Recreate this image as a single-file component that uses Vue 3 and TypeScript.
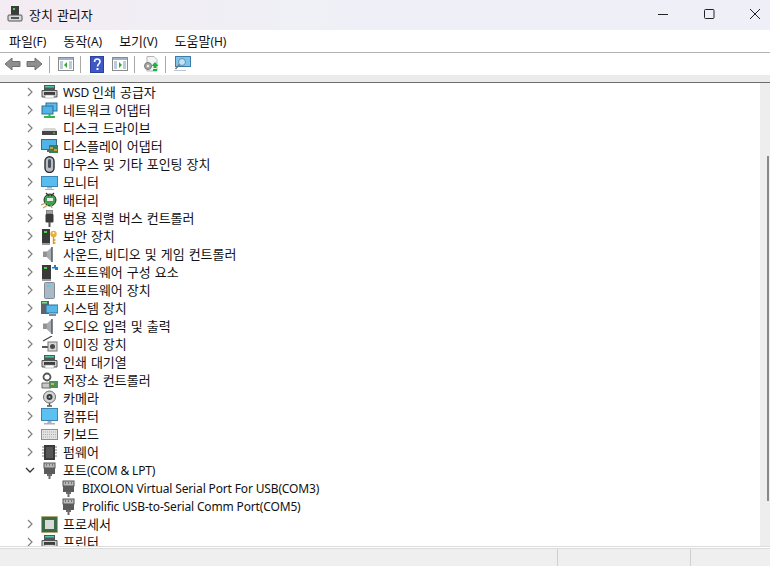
<script setup lang="ts">
interface Row { label: string; icon: string; level?: number; open?: boolean }
interface Part { text: string; ko: boolean }
const rows: Row[] = [
  { label: 'WSD 인쇄 공급자', icon: 'printer' },
  { label: '네트워크 어댑터', icon: 'network' },
  { label: '디스크 드라이브', icon: 'disk' },
  { label: '디스플레이 어댑터', icon: 'display' },
  { label: '마우스 및 기타 포인팅 장치', icon: 'mouse' },
  { label: '모니터', icon: 'monitor' },
  { label: '배터리', icon: 'battery' },
  { label: '범용 직렬 버스 컨트롤러', icon: 'usb' },
  { label: '보안 장치', icon: 'security' },
  { label: '사운드, 비디오 및 게임 컨트롤러', icon: 'sound' },
  { label: '소프트웨어 구성 요소', icon: 'component' },
  { label: '소프트웨어 장치', icon: 'softdev' },
  { label: '시스템 장치', icon: 'system' },
  { label: '오디오 입력 및 출력', icon: 'sound' },
  { label: '이미징 장치', icon: 'imaging' },
  { label: '인쇄 대기열', icon: 'printer' },
  { label: '저장소 컨트롤러', icon: 'storage' },
  { label: '카메라', icon: 'camera' },
  { label: '컴퓨터', icon: 'computer' },
  { label: '키보드', icon: 'keyboard' },
  { label: '펌웨어', icon: 'firmware' },
  { label: '포트(COM & LPT)', icon: 'port', open: true },
  { label: 'BIXOLON Virtual Serial Port For USB(COM3)', icon: 'port', level: 1 },
  { label: 'Prolific USB-to-Serial Comm Port(COM5)', icon: 'port', level: 1 },
  { label: '프로세서', icon: 'cpu' },
  { label: '프린터', icon: 'printer' },
]
const menus = ['파일(F)', '동작(A)', '보기(V)', '도움말(H)']
function parts(s: string): Part[] {
  return s
    .split(/([\uAC00-\uD7A3][\uAC00-\uD7A3 ]*)/)
    .filter((t) => t.length > 0)
    .map((t) => ({ text: t, ko: /[\uAC00-\uD7A3]/.test(t) }))
}
</script>

<template>
  <div class="window">
    <header class="titlebar">
      <svg class="app-icon" width="16" height="18" viewBox="0 0 16 18">
        <rect x="4" y="1" width="8" height="10" fill="#3c3c3c" />
        <rect x="6" y="3" width="2" height="2" fill="#4fd04f" />
        <rect x="1" y="10" width="14" height="6" rx="1" fill="#d8d8d8" stroke="#555" />
        <rect x="4" y="12" width="8" height="2" fill="#555" />
      </svg>
      <span class="title"><span v-for="(p, i) in parts('장치 관리자')" :key="i" :class="{ ko: p.ko }">{{ p.text }}</span></span>
      <div class="controls">
        <svg width="46" height="30" viewBox="0 0 46 30"><path d="M18 14.5h10" stroke="#222" fill="none" /></svg>
        <svg width="46" height="30" viewBox="0 0 46 30"><rect x="18.5" y="9.500" width="9.500" height="9" rx="1" stroke="#222" fill="none" /></svg>
        <svg width="38" height="30" viewBox="0 0 38 30"><path d="M18 9l10 10M28 9l-10 10" stroke="#222" fill="none" /></svg>
      </div>
    </header>

    <nav class="menubar">
      <span v-for="m in menus" :key="m" class="menu"><span v-for="(p, i) in parts(m)" :key="i" :class="{ ko: p.ko }">{{ p.text }}</span></span>
    </nav>

    <div class="toolbar">
      <svg class="tool" width="39" height="16" viewBox="0 0 39 16">
        <path d="M1 8l7-6v3.500h8v5h-8V14z" fill="#8f8f8f" stroke="#707070" />
        <path d="M38 8l-7-6v3.500h-8v5h8V14z" fill="#8f8f8f" stroke="#707070" />
      </svg>
      <i class="sep" />
      <svg class="tool" width="16" height="14" viewBox="0 0 16 14">
        <rect x=".5" y=".5" width="15" height="13" fill="#fff" stroke="#8b8b8b" />
        <rect x="1" y="1" width="14" height="2" fill="#9fb3c8" />
        <path d="M2 5h3M2 7h3M2 9h3M2 11h3M11 5h3M11 7h3M11 9h3M11 11h3" stroke="#7d98b3" />
        <path d="M9 5v6L6 8z" fill="#35a835" />
      </svg>
      <i class="sep" />
      <svg class="tool help" width="14" height="17" viewBox="0 0 14 17">
        <rect width="14" height="17" fill="#2b3fa6" />
        <rect x="1" y="1" width="12" height="15" fill="#3d58c4" />
        <path d="M4.500 6c0-4 5.500-4 5.500-.5 0 2.500-2.500 2.500-2.500 5" stroke="#fff" stroke-width="1.600" fill="none" />
        <rect x="6.500" y="12" width="2" height="2" fill="#fff" />
      </svg>
      <svg class="tool gap" width="16" height="14" viewBox="0 0 16 14">
        <rect x=".5" y=".5" width="15" height="13" fill="#fff" stroke="#8b8b8b" />
        <rect x="1" y="1" width="14" height="2" fill="#9fb3c8" />
        <path d="M2 5h3M2 7h3M2 9h3M2 11h3M11 5h3M11 7h3M11 9h3M11 11h3" stroke="#7d98b3" />
        <path d="M7 5v6l3-3z" fill="#35a835" />
      </svg>
      <i class="sep" />
      <svg class="tool" width="16" height="16" viewBox="0 0 16 16">
        <path d="M4 .5h7l3 3V15H4z" fill="#f4f4f4" stroke="#b5b5b5" />
        <circle cx="5" cy="10" r="3.500" fill="#a8a8a8" stroke="#777" />
        <circle cx="5" cy="10" r="1.200" fill="#eee" />
        <path d="M12 6l3.500 4H13.500v2h-3v-2H8.500z" fill="#19b53a" />
        <rect x="10" y="13" width="4" height="2" fill="#19b53a" />
      </svg>
      <i class="sep" />
      <svg class="tool" width="17" height="16" viewBox="0 0 17 16">
        <rect x="1.500" y=".5" width="15" height="10" fill="#7fc4ec" stroke="#3c7ca8" />
        <path d="M0 14h12v1H0z" fill="#b9c6d0" />
        <circle cx="8" cy="6" r="3.500" fill="#bfe3f7" stroke="#6a8da6" />
        <path d="M5.500 8.500L1.500 13" stroke="#777" stroke-width="1.500" />
      </svg>
    </div>
    <div class="toolbar-edge" />

    <main class="content">
      <div class="tree">
        <div v-for="r in rows" :key="r.label" class="row" :class="{ child: r.level }">
          <svg v-if="!r.level" class="chevron" width="10" height="10" viewBox="0 0 10 10">
            <path v-if="r.open" d="M1 3l4 4 4-4" stroke="#333" stroke-width="1.300" fill="none" />
            <path v-else d="M3 1l4 4-4 4" stroke="#808080" stroke-width="1.200" fill="none" />
          </svg>
          <svg class="icon" width="17" height="17" viewBox="0 0 17 17">
            <template v-if="r.icon === 'printer'">
              <rect x="3" y="1" width="11" height="5" fill="#4d5a5a" />
              <rect x="4" y="2" width="9" height="1.500" fill="#4fc9a4" />
              <path d="M1 6.500h15V13H1z" fill="#c9ced1" stroke="#555" />
              <rect x="3" y="8" width="11" height="3" fill="#3f3f3f" />
              <rect x="4" y="11" width="9" height="3" fill="#fff" stroke="#888" stroke-width=".5" />
            </template>
            <template v-else-if="r.icon === 'network'">
              <rect x="5" y="1" width="11" height="8" fill="#5dbcec" stroke="#2f6e98" />
              <rect x="1" y="4" width="11" height="8" fill="#52b3e6" stroke="#2f6e98" />
              <path d="M3 15h11M8.500 12v3" stroke="#37b24d" stroke-width="2" />
            </template>
            <template v-else-if="r.icon === 'disk'">
              <path d="M3 8h11l2 3v4H1v-4z" fill="#d8d8d8" />
              <rect x="1" y="11" width="15" height="4" fill="#454545" />
              <rect x="12" y="12.500" width="2" height="1" fill="#5fe05f" />
            </template>
            <template v-else-if="r.icon === 'display'">
              <rect x=".5" y="1.500" width="15" height="10" fill="#52b3e6" stroke="#2f6e98" />
              <rect x="6" y="12" width="5" height="2" fill="#666" />
              <rect x="8" y="7" width="9" height="8" fill="#3f7d55" />
              <path d="M9 9h3v2H9zM13 11h3v2h-3z" fill="#c9a23b" />
            </template>
            <template v-else-if="r.icon === 'mouse'">
              <rect x="4" y=".7" width="9" height="15.800" rx="4.500" fill="#b9bec6" stroke="#2a2c30" stroke-width="1.400" />
              <rect x="7" y="3" width="3" height="9" rx="1.500" fill="#4a5058" />
            </template>
            <template v-else-if="r.icon === 'monitor'">
              <rect x=".5" y="2.500" width="16" height="10" fill="#58bdee" stroke="#3a86b3" />
              <path d="M6 13h5v1.500H6zM4 15h9v1H4z" fill="#a9b2b8" />
            </template>
            <template v-else-if="r.icon === 'battery'">
              <circle cx="9" cy="8" r="6" fill="#3fa34d" stroke="#2c2c2c" />
              <path d="M5 1l3 3M13 1l-3 3" stroke="#333" stroke-width="1.300" />
              <path d="M0 13l5-2M2 16l5-3M10 13l1 3" stroke="#c7a04a" stroke-width="1.300" />
              <path d="M6 6h6v3H6z" fill="#e9eee9" />
            </template>
            <template v-else-if="r.icon === 'usb'">
              <rect x="5.500" y="0" width="6" height="4" fill="#a4a4a4" stroke="#555" stroke-width=".6" />
              <rect x="4.500" y="4" width="8" height="8.500" rx="1" fill="#3b3b3b" />
              <rect x="7.500" y="12" width="2" height="5" fill="#555" />
            </template>
            <template v-else-if="r.icon === 'security'">
              <rect x="1" y="1" width="8" height="14" fill="#3a3a3a" />
              <rect x="3" y="3" width="3" height="2" fill="#4fd04f" />
              <rect x="1" y="15" width="8" height="2" fill="#9a9a9a" />
              <circle cx="12.500" cy="6" r="3.200" fill="#e5b23a" />
              <circle cx="12.500" cy="5" r="1" fill="#fff" />
              <path d="M12.500 9v7M12.500 12h2M12.500 15h2" stroke="#d19c25" stroke-width="1.400" />
            </template>
            <template v-else-if="r.icon === 'sound'">
              <path d="M2 5.500h4V11H2z" fill="#8e9398" />
              <path d="M6 5.500L11 1v15l-5-4.500z" fill="#a6acb1" />
              <path d="M11 1v15" stroke="#565b60" stroke-width="1.500" />
            </template>
            <template v-else-if="r.icon === 'component'">
              <rect x="1" y="1" width="9" height="14" fill="#3a3a3a" />
              <rect x="3" y="3" width="3" height="2" fill="#4fd04f" />
              <rect x="1" y="15" width="9" height="2" fill="#9a9a9a" />
              <path d="M11 3h2V1h2v2h2v3h-3V4.500h-3z" fill="#1f7fd1" />
            </template>
            <template v-else-if="r.icon === 'softdev'">
              <rect x="3.500" y=".5" width="10" height="16" rx="1" fill="#aab9c5" stroke="#7e8c97" />
              <rect x="6" y="3" width="3" height="2" fill="#46d7e2" />
            </template>
            <template v-else-if="r.icon === 'system'">
              <rect x="0" y="1" width="8" height="13" fill="#5c6468" />
              <rect x="1" y="2" width="5" height="1.500" fill="#7fe08a" />
              <rect x="5" y="5" width="12" height="8" fill="#55b8ea" stroke="#2f6e98" />
              <path d="M8 15h7" stroke="#8a8a8a" stroke-width="2" />
            </template>
            <template v-else-if="r.icon === 'imaging'">
              <path d="M2 5l9-5" stroke="#444" stroke-width="1.200" />
              <path d="M1 10h6v2H1z" fill="#555" />
              <rect x="7" y="6" width="9" height="9" fill="#d9d9d9" stroke="#777" />
              <circle cx="11.500" cy="10.500" r="2.500" fill="#4a4a4a" />
            </template>
            <template v-else-if="r.icon === 'storage'">
              <circle cx="6" cy="5" r="3.500" fill="none" stroke="#555" stroke-width="1.800" />
              <path d="M1 11h9v5H1z" fill="#c9c9c9" stroke="#666" />
              <rect x="8" y="9" width="9" height="7" fill="#4b9159" />
              <path d="M10 11h3v2h-3z" fill="#d7b24a" />
            </template>
            <template v-else-if="r.icon === 'camera'">
              <circle cx="8.500" cy="7" r="6" fill="#d5d5d5" stroke="#6b6b6b" />
              <circle cx="8.500" cy="7" r="3" fill="#3c3c3c" />
              <circle cx="8.500" cy="7" r="1" fill="#9ec5dd" />
              <path d="M6 16h5M8.500 13v3" stroke="#555" stroke-width="1.400" />
            </template>
            <template v-else-if="r.icon === 'computer'">
              <rect x=".5" y=".5" width="16" height="12" fill="#5cc0f0" stroke="#3a86b3" />
              <path d="M6.500 13h4v2h-4zM3 15h11v1.500H3z" fill="#a9b2b8" />
            </template>
            <template v-else-if="r.icon === 'keyboard'">
              <rect x=".5" y="3.500" width="16" height="10" fill="#e3e3e3" stroke="#8f8f8f" />
              <path d="M2 6h13M2 8.500h13M2 11h13" stroke="#a9a9a9" stroke-dasharray="1 1" />
            </template>
            <template v-else-if="r.icon === 'firmware'">
              <rect x="3" y="1" width="11" height="15" fill="#3a3a3a" />
              <path d="M1 3h2M1 6h2M1 9h2M1 12h2M14 3h2M14 6h2M14 9h2M14 12h2" stroke="#7a7a7a" />
              <rect x="5" y="3" width="7" height="11" fill="#565656" />
            </template>
            <template v-else-if="r.icon === 'port'">
              <rect x="3" y="1" width="11" height="5" fill="#b9b9b9" stroke="#555" />
              <path d="M5 3h1M8 3h1M11 3h1" stroke="#333" />
              <rect x="3" y="6" width="11" height="6" fill="#5b5b5b" />
              <rect x="6" y="12" width="5" height="2" fill="#6b6b6b" />
              <rect x="7.500" y="14" width="2" height="3" fill="#6b6b6b" />
            </template>
            <template v-else-if="r.icon === 'cpu'">
              <rect x=".5" y=".5" width="16" height="16" fill="#3d6a45" stroke="#c7a04a" stroke-dasharray="1 1" />
              <rect x="2" y="2" width="13" height="13" fill="#3d6a45" />
              <rect x="4" y="4" width="9" height="9" fill="#d8dcd8" />
            </template>
          </svg>
          <span class="label"><span v-for="(p, i) in parts(r.label)" :key="i" :class="{ ko: p.ko }">{{ p.text }}</span></span>
        </div>
      </div>
      <div class="scrollbar"><div class="thumb" /></div>
    </main>

    <footer class="status">
      <span class="cell main" />
      <span class="cell mid" />
      <span class="cell last" />
    </footer>
  </div>
</template>

<style>
html, body { margin: 0; background: #fff; }
</style>

<style scoped>
.window {
  width: 770px;
  height: 566px;
  display: flex;
  flex-direction: column;
  overflow: hidden;
  font-family: "Noto Sans", "Noto Sans CJK KR", sans-serif;
  font-size: 12px;
  letter-spacing: -0.15px;
  color: #111;
}
.ko {
  font-size: 13px;
  letter-spacing: 0;
  word-spacing: 0.6px;
}
.titlebar {
  height: 30px;
  flex: none;
  display: flex;
  align-items: center;
  background: linear-gradient(90deg, #f3ecf2, #eff0f7 45%);
  padding-left: 7px;
}
.app-icon { flex: none; margin-bottom: 2px; }
.title { margin-left: 6px; margin-bottom: 2px; }
.controls { margin-left: auto; display: flex; }
.menubar {
  height: 22px;
  flex: none;
  display: flex;
  align-items: center;
  padding: 0 0 2px 9px;
  box-sizing: content-box;
  height: 20px;
  gap: 17px;
  background: #fff;
  border-bottom: 1px solid #b4b4b4;
  letter-spacing: 0;
}
.toolbar {
  height: 22px;
  flex: none;
  display: flex;
  align-items: center;
  background: #fff;
  padding-left: 4px;
}
.tool { flex: none; }
.tool.help { margin-left: 1px; }
.tool.gap { margin-left: 8px; }
.sep { width: 1px; height: 17px; background: #a8a8a8; margin: 0 8px 0 6px; }
.toolbar-edge {
  height: 8px;
  flex: none;
  background: #ebebeb;
  border-bottom: 1px solid #6d6d6d;
  box-sizing: border-box;
}
.content {
  flex: 1;
  min-height: 0;
  display: flex;
  background: #fff;
  border-bottom: 1px solid #dcdcdc;
}
.tree { flex: 1; overflow: hidden; }
.row {
  height: 18px;
  display: flex;
  align-items: center;
  padding-left: 25px;
  white-space: nowrap;
}
.row.child { padding-left: 60px; }
.row.child .label { margin-top: 2px; }
.chevron { flex: none; margin-right: 6px; }
.icon { flex: none; }
.label { margin-left: 5px; line-height: 18px; }
.scrollbar { width: 10px; flex: none; background: #eeeeee; position: relative; }
.thumb {
  position: absolute;
  right: 1px;
  top: 73px;
  width: 2px;
  height: 345px;
  background: #8a8a8a;
}
.status {
  height: 18px;
  flex: none;
  display: flex;
  background: #efefef;
  border-top: 1px solid #dcdcdc;
  margin-top: 1px;
  box-sizing: border-box;
}
.cell { height: 100%; }
.main { width: 557px; border-right: 1px solid #d0d0d0; }
.mid { width: 132px; border-right: 1px solid #d0d0d0; }
.last { flex: 1; }
</style>
